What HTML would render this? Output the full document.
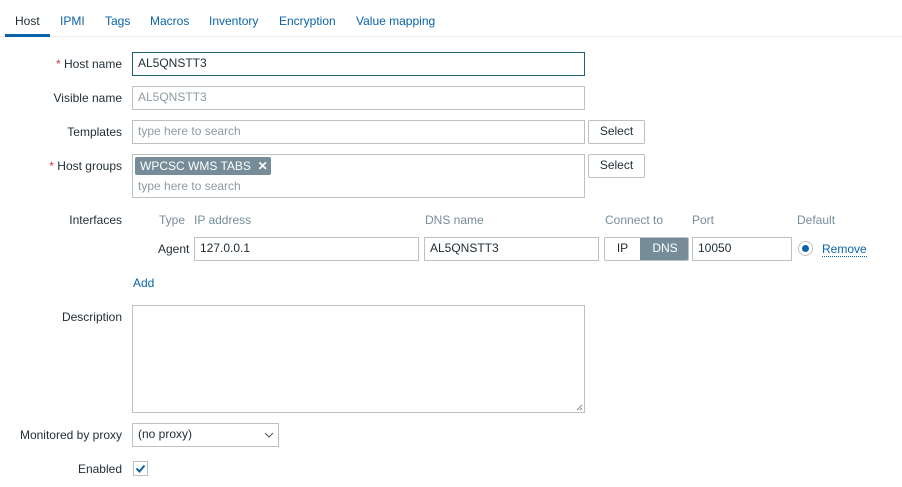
<!DOCTYPE html>
<html><head><meta charset="utf-8"><style>
body{margin:0;width:902px;height:487px;background:#fff;font-family:"Liberation Sans",Arial,sans-serif;font-size:12px;color:#1f2c33;position:relative;overflow:hidden}
.a{position:absolute;white-space:nowrap}
.tab{position:absolute;top:14px;color:#0a63a8}
.lbl{position:absolute;right:780px;text-align:right;color:#1f2c33}
.req{color:#d2383c}
.in{position:absolute;border:1px solid #bac2c6;box-sizing:border-box;background:#fff;padding-left:5px;line-height:21px;color:#1f2c33}
.ph{color:#8f9ba1}
.btn{position:absolute;border:1px solid #bac2c6;box-sizing:border-box;border-radius:2px;background:#fff;text-align:center;line-height:21px;color:#1f2c33}
.hd{position:absolute;top:213px;color:#768d99}
</style></head><body>
<div class="tab" style="left:15px;color:#1f2c33">Host</div>
<div class="tab" style="left:60px">IPMI</div>
<div class="tab" style="left:105px">Tags</div>
<div class="tab" style="left:150px">Macros</div>
<div class="tab" style="left:209px">Inventory</div>
<div class="tab" style="left:279px">Encryption</div>
<div class="tab" style="left:356px">Value mapping</div>
<div class="a" style="left:0;top:36px;width:902px;height:1px;background:#ebeef0"></div>
<div class="a" style="left:5px;top:34px;width:45px;height:3px;background:#0a63a8"></div>

<div class="a lbl" style="top:57px"><span class="req">*</span> Host name</div>
<div class="in" style="left:132px;top:52px;width:453px;height:24px;border-color:#1f5f73">AL5QNSTT3</div>
<div class="a lbl" style="top:91px">Visible name</div>
<div class="in ph" style="left:132px;top:86px;width:453px;height:24px">AL5QNSTT3</div>
<div class="a lbl" style="top:125px">Templates</div>
<div class="in ph" style="left:132px;top:120px;width:453px;height:24px">type here to search</div>
<div class="btn" style="left:588px;top:120px;width:57px;height:24px">Select</div>
<div class="a lbl" style="top:159px"><span class="req">*</span> Host groups</div>
<div class="in" style="left:132px;top:154px;width:453px;height:44px"></div>
<div class="a" style="left:135px;top:157px;width:136px;height:18px;background:#768d99;color:#fff;border-radius:2px;line-height:18px;padding-left:5px;box-sizing:border-box">WPCSC WMS TABS &nbsp;<b>✕</b></div>
<div class="a ph" style="left:138px;top:179px">type here to search</div>
<div class="btn" style="left:588px;top:154px;width:57px;height:24px">Select</div>

<div class="a lbl" style="top:213px">Interfaces</div>
<div class="hd" style="left:159px">Type</div>
<div class="hd" style="left:194px">IP address</div>
<div class="hd" style="left:425px">DNS name</div>
<div class="hd" style="left:605px">Connect to</div>
<div class="hd" style="left:692px">Port</div>
<div class="hd" style="left:797px">Default</div>
<div class="a" style="left:158px;top:242px">Agent</div>
<div class="in" style="left:194px;top:237px;width:225px;height:24px">127.0.0.1</div>
<div class="in" style="left:424px;top:237px;width:175px;height:24px">AL5QNSTT3</div>
<div class="in" style="left:604px;top:237px;width:85px;height:24px;padding:0;border-radius:2px;overflow:hidden"><span class="a" style="left:0;top:0;width:35px;text-align:center">IP</span><span class="a" style="left:35px;top:0;width:50px;height:22px;background:#768d99;color:#fff;text-align:center">DNS</span></div>
<div class="in" style="left:692px;top:237px;width:100px;height:24px">10050</div>
<div class="a" style="left:798px;top:241px;width:15px;height:15px;border:1px solid #bac2c6;border-radius:50%;box-sizing:border-box"></div>
<div class="a" style="left:802px;top:245px;width:7px;height:7px;background:#0a63a8;border-radius:50%"></div>
<div class="a" style="left:822px;top:242px;color:#0a63a8;border-bottom:1px dotted #0a63a8;line-height:14px">Remove</div>
<div class="a" style="left:133px;top:276px;color:#0a63a8">Add</div>

<div class="a lbl" style="top:310px">Description</div>
<div class="in" style="left:132px;top:305px;width:453px;height:108px"><svg class="a" style="right:1px;bottom:1px" width="7" height="7"><path d="M6 1L1 6M6 4L4 6" stroke="#888"/></svg></div>
<div class="a lbl" style="top:428px">Monitored by proxy</div>
<div class="in" style="left:132px;top:423px;width:147px;height:24px">(no proxy)<svg class="a" style="left:131px;top:8px" width="10" height="6"><path d="M1 1L5 5L9 1" stroke="#555" fill="none"/></svg></div>
<div class="a lbl" style="top:462px">Enabled</div>
<div class="a" style="left:133px;top:461px;width:15px;height:15px;border:1px solid #bac2c6;box-sizing:border-box"><svg width="13" height="13" style="position:absolute;left:0;top:0"><path d="M2.5 6.5L5.5 9.5L10.5 3.5" stroke="#0a63a8" stroke-width="2" fill="none"/></svg></div>
</body></html>
